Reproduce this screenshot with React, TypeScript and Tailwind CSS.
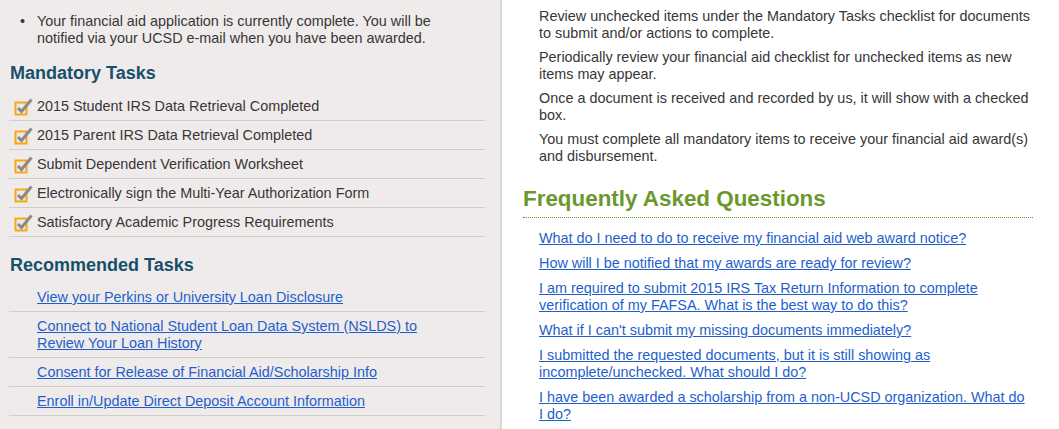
import React from "react";

const CheckIcon = () => (
  <svg width="20" height="19" viewBox="0 0 20 19" className="shrink-0">
    <rect x="1.5" y="5.5" width="11" height="12" fill="#ece8e8" stroke="#f6a912" strokeWidth="2" />
    <path d="M4 11 L7.5 14.5 L17.5 2.5" fill="none" stroke="#8a8a8a" strokeWidth="3" strokeLinejoin="miter" />
  </svg>
);

const mandatory = [
  "2015 Student IRS Data Retrieval Completed",
  "2015 Parent IRS Data Retrieval Completed",
  "Submit Dependent Verification Worksheet",
  "Electronically sign the Multi-Year Authorization Form",
  "Satisfactory Academic Progress Requirements",
];

const recommended = [
  "View your Perkins or University Loan Disclosure",
  "Connect to National Student Loan Data System (NSLDS) to Review Your Loan History",
  "Consent for Release of Financial Aid/Scholarship Info",
  "Enroll in/Update Direct Deposit Account Information",
];

const paras = [
  "Review unchecked items under the Mandatory Tasks checklist for documents to submit and/or actions to complete.",
  "Periodically review your financial aid checklist for unchecked items as new items may appear.",
  "Once a document is received and recorded by us, it will show with a checked box.",
  "You must complete all mandatory items to receive your financial aid award(s) and disbursement.",
];

const faqs = [
  "What do I need to do to receive my financial aid web award notice?",
  "How will I be notified that my awards are ready for review?",
  "I am required to submit 2015 IRS Tax Return Information to complete verification of my FAFSA. What is the best way to do this?",
  "What if I can't submit my missing documents immediately?",
  "I submitted the requested documents, but it is still showing as incomplete/unchecked. What should I do?",
  "I have been awarded a scholarship from a non-UCSD organization. What do I do?",
];

export default function App() {
  return (
    <div
      className="flex w-[1059px] h-[429px] overflow-hidden bg-white text-[14.4px] leading-[17px] text-[#363636]"
      style={{ fontFamily: '"Liberation Sans", Arial, sans-serif' }}
    >
      {/* Left column */}
      <div className="w-[502px] shrink-0 bg-[#f0ebeb] border-r-2 border-[#dcd5d5]">
        <div className="flex pt-[13px] pl-[20px] pr-[40px]">
          <span className="w-[17px] shrink-0">•</span>
          <p>
            Your financial aid application is currently complete. You will be notified via your UCSD e-mail when you
            have been awarded.
          </p>
        </div>
        <h2 className="mt-[15px] ml-[10px] text-[18px] leading-[22px] font-bold text-[#174f6d]">Mandatory Tasks</h2>
        <div className="mt-[8px] ml-[9px] w-[476px]">
          {mandatory.map((t) => (
            <div key={t} className="flex items-center h-[29px] border-b border-[#d2cdcd] pl-[5px] gap-[3px]">
              <CheckIcon />
              <span>{t}</span>
            </div>
          ))}
        </div>
        <h2 className="mt-[17px] ml-[10px] text-[18px] leading-[22px] font-bold text-[#174f6d]">
          Recommended Tasks
        </h2>
        <div className="mt-[7px] ml-[9px] w-[476px]">
          {recommended.map((t) => (
            <div key={t} className="pt-[6px] pb-[5px] pl-[28px] pr-[50px] border-b border-[#d2cdcd]">
              <a href="#" className="underline text-[#1f5fcc]">
                {t}
              </a>
            </div>
          ))}
        </div>
      </div>

      {/* Right column */}
      <div className="flex-1 pl-[21px] pr-[26px]">
        <div className="pl-[16px] pt-[8px] flex flex-col gap-[7px]">
          {paras.map((p) => (
            <p key={p}>{p}</p>
          ))}
        </div>
        <h2 className="mt-[21px] text-[22.4px] leading-[26px] font-bold text-[#6a982c] pb-[5px] border-b border-dotted border-[#6a982c]">
          Frequently Asked Questions
        </h2>
        <div className="mt-[12px] pl-[16px] pr-[6px] flex flex-col gap-[8px]">
          {faqs.map((f) => (
            <a key={f} href="#" className="underline text-[#1f5fcc]">
              {f}
            </a>
          ))}
        </div>
      </div>
    </div>
  );
}
